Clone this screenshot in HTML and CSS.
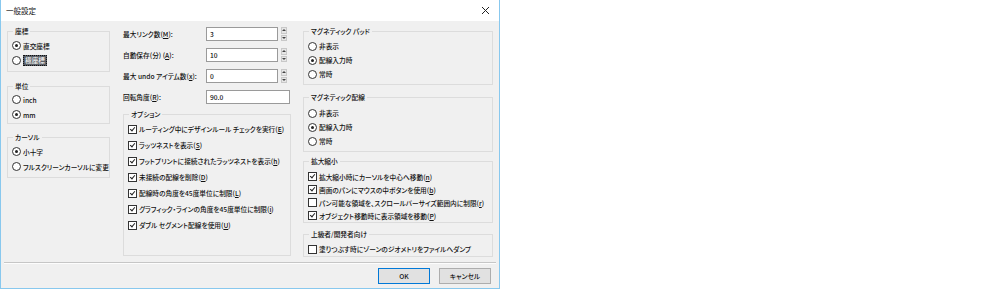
FILE: index.html
```html
<!DOCTYPE html>
<html lang="ja">
<head>
    <meta charset="UTF-8">
    <title>一般設定</title>
    <link rel="stylesheet" href="styles.css">
</head>
<body>
    <div class="dialog">
        <div class="titlebar">
            <span>一般設定</span>
            <svg class="close" width="9" height="9" viewBox="0 0 9 9"><path d="M1 1 L8 8 M8 1 L1 8" stroke="#222" stroke-width="1"/></svg>
        </div>

        <div class="content">
            <!-- left column -->
            <div class="col col-left">
                <fieldset class="grp g-coord">
                    <legend>座標</legend>
                    <div class="row"><span class="radio on"></span>直交座標</div>
                    <div class="row"><span class="radio"></span><span class="sel">極座標</span></div>
                </fieldset>
                <fieldset class="grp g-unit">
                    <legend>単位</legend>
                    <div class="row"><span class="radio"></span>inch</div>
                    <div class="row"><span class="radio on"></span>mm</div>
                </fieldset>
                <fieldset class="grp g-cursor">
                    <legend>カーソル</legend>
                    <div class="row"><span class="radio on"></span>小十字</div>
                    <div class="row"><span class="radio"></span>フルスクリーンカーソルに変更</div>
                </fieldset>
            </div>

            <!-- middle column -->
            <div class="col col-mid">
                <div class="field">
                    <label>最大リンク数(<u>M</u>):</label>
                    <div class="input">3</div>
                    <div class="spin"><span class="up"></span><span class="down"></span></div>
                </div>
                <div class="field">
                    <label>自動保存(分) (<u>A</u>):</label>
                    <div class="input">10</div>
                    <div class="spin"><span class="up"></span><span class="down"></span></div>
                </div>
                <div class="field">
                    <label>最大 undo アイテム数(<u>x</u>):</label>
                    <div class="input">0</div>
                    <div class="spin"><span class="up"></span><span class="down"></span></div>
                </div>
                <div class="field">
                    <label>回転角度(<u>R</u>):</label>
                    <div class="input wide">90.0</div>
                </div>

                <fieldset class="grp g-options">
                    <legend>オプション</legend>
                    <div class="row tall"><span class="check on"></span>ルーティング中にデザインルール チェックを実行(<u>E</u>)</div>
                    <div class="row tall"><span class="check on"></span>ラッツネストを表示(<u>S</u>)</div>
                    <div class="row tall"><span class="check on"></span>フットプリントに接続されたラッツネストを表示(<u>h</u>)</div>
                    <div class="row tall"><span class="check on"></span>未接続の配線を削除(<u>D</u>)</div>
                    <div class="row tall"><span class="check on"></span>配線時の角度を45度単位に制限(<u>L</u>)</div>
                    <div class="row tall"><span class="check on"></span>グラフィック・ラインの角度を45度単位に制限(<u>i</u>)</div>
                    <div class="row tall"><span class="check on"></span>ダブル セグメント配線を使用(<u>U</u>)</div>
                </fieldset>
            </div>

            <!-- right column -->
            <div class="col col-right">
                <fieldset class="grp g-pad">
                    <legend>マグネティック パッド</legend>
                    <div class="row r14"><span class="radio"></span>非表示</div>
                    <div class="row r14"><span class="radio on"></span>配線入力時</div>
                    <div class="row r14"><span class="radio"></span>常時</div>
                </fieldset>
                <fieldset class="grp g-track">
                    <legend>マグネティック配線</legend>
                    <div class="row r14"><span class="radio"></span>非表示</div>
                    <div class="row r14"><span class="radio on"></span>配線入力時</div>
                    <div class="row r14"><span class="radio"></span>常時</div>
                </fieldset>
                <fieldset class="grp g-zoom">
                    <legend>拡大縮小</legend>
                    <div class="row r13"><span class="check on"></span>拡大縮小時にカーソルを中心へ移動(<u>n</u>)</div>
                    <div class="row r13"><span class="check on"></span>画面のパンにマウスの中ボタンを使用(<u>b</u>)</div>
                    <div class="row r13"><span class="check"></span>パン可能な領域を、スクロールバーサイズ範囲内に制限(<u>r</u>)</div>
                    <div class="row r13"><span class="check on"></span>オブジェクト移動時に表示領域を移動(<u>P</u>)</div>
                </fieldset>
                <fieldset class="grp g-adv">
                    <legend>上級者/開発者向け</legend>
                    <div class="row r14"><span class="check"></span>塗りつぶす時にゾーンのジオメトリをファイルへダンプ</div>
                </fieldset>
            </div>
        </div>

        <div class="separator"></div>
        <div class="buttons">
            <button class="btn default">OK</button>
            <button class="btn">キャンセル</button>
        </div>
    </div>
</body>
</html>
```

FILE: styles.css
```css
body {
    margin: 0;
    background: #fff;
    font-family: "Noto Sans CJK JP", "Noto Sans", sans-serif;
    font-size: 6.7px;
    font-weight: 500;
    font-feature-settings: "palt";
    color: #111;
}
.dialog {
    width: 500px;
    height: 289px;
    box-sizing: border-box;
    border: 1px solid #88c8ee;
    border-top: none;
    background: #f0f0f0;
    display: flex;
    flex-direction: column;
}
.titlebar {
    height: 21px;
    background: #fff;
    display: flex;
    align-items: center;
    justify-content: space-between;
    padding: 0 9px 0 5px;
    font-size: 7.5px;
    font-weight: 400;
    line-height: 10px;
}
.content {
    height: 241px;
    display: flex;
    padding: 5px 0 0 6px;
    box-sizing: border-box;
}
.col { display: flex; flex-direction: column; }
.col-left { width: 103px; }
.col-mid { width: 168px; margin-left: 13px; }
.col-right { width: 190px; margin-left: 12px; }

/* group boxes */
.grp {
    margin: 0;
    border: 1px solid #dcdcdc;
    padding: 0 0 0 4px;
    min-width: 0;
}
.grp legend {
    padding: 0 2px;
    margin-left: 1px;
    line-height: 10px;
}
.row {
    display: flex;
    align-items: center;
    height: 15px;
    line-height: 10px;
    white-space: nowrap;
}
.row.tall { height: 16px; }
.row.r14 { height: 14px; }
.row.r13 { height: 13px; }

.g-coord { padding-top: 2px; padding-bottom: 3px; }
.g-unit { margin-top: 9px; padding-top: 1px; padding-bottom: 1px; }
.g-cursor { margin-top: 8px; padding-top: 2px; padding-bottom: 3px; }
.g-options { margin-top: 5px; padding-top: 2px; padding-bottom: 22px; }
.g-pad { padding-top: 3px; padding-bottom: 3px; }
.g-track { margin-top: 7px; padding-top: 4px; padding-bottom: 3px; }
.g-zoom { margin-top: 4px; padding-top: 4px; padding-bottom: 0; }
.g-adv { margin-top: 6px; padding-top: 3px; padding-bottom: 0; }

.sel {
    background: #5a5f66;
    color: #f4f4f4;
    border: 1px dotted #111;
    line-height: 9px;
    padding: 0 1px;
}

/* radio and check marks */
.radio {
    width: 7px;
    height: 7px;
    border: 1px solid #333;
    border-radius: 50%;
    background: #fff;
    margin-right: 2px;
    position: relative;
    flex: none;
}
.radio.on::after {
    content: "";
    position: absolute;
    left: 2px;
    top: 2px;
    width: 3px;
    height: 3px;
    border-radius: 50%;
    background: #222;
}
.check {
    width: 7px;
    height: 7px;
    border: 1px solid #333;
    background: #fff;
    margin-right: 2px;
    position: relative;
    flex: none;
}
.check.on::after {
    content: "";
    position: absolute;
    left: 2px;
    top: 0;
    width: 2px;
    height: 4px;
    border: solid #222;
    border-width: 0 1px 1px 0;
    transform: rotate(40deg);
}

/* numeric fields */
.field {
    display: flex;
    align-items: center;
    height: 14px;
    margin-top: 7px;
    line-height: 10px;
}
.field:first-child { margin-top: 1px; }
.field label { width: 83px; flex: none; white-space: nowrap; }
.input {
    width: 72px;
    height: 14px;
    box-sizing: border-box;
    border: 1px solid #9a9a9a;
    background: #fff;
    padding: 1px 3px;
    line-height: 10px;
}
.input.wide { width: 84px; }
.spin {
    display: flex;
    flex-direction: column;
    width: 6px;
    height: 14px;
    margin-left: 3px;
    gap: 1px;
}
.spin span {
    flex: 1;
    background: #e6e6e6;
    border: 1px solid #c8c8c8;
    display: flex;
    align-items: center;
    justify-content: center;
}
.spin .up::before,
.spin .down::before {
    content: "";
    border-left: 2px solid transparent;
    border-right: 2px solid transparent;
}
.spin .up::before { border-bottom: 2px solid #444; }
.spin .down::before { border-top: 2px solid #444; }

/* footer */
.separator {
    height: 1px;
    background: #c6c6c6;
    border-bottom: 1px solid #fdfdfd;
    margin: 0 3px;
}
.buttons {
    display: flex;
    justify-content: flex-end;
    gap: 9px;
    padding: 4px 8px 0 0;
}
.btn {
    width: 52px;
    height: 16px;
    padding: 0;
    font-family: inherit;
    font-size: 6.7px;
    font-weight: 500;
    font-feature-settings: "palt";
    background: #e1e1e1;
    border: 1px solid #adadad;
    color: #111;
    line-height: 10px;
}
.btn.default { border-color: #0078d7; }
```
